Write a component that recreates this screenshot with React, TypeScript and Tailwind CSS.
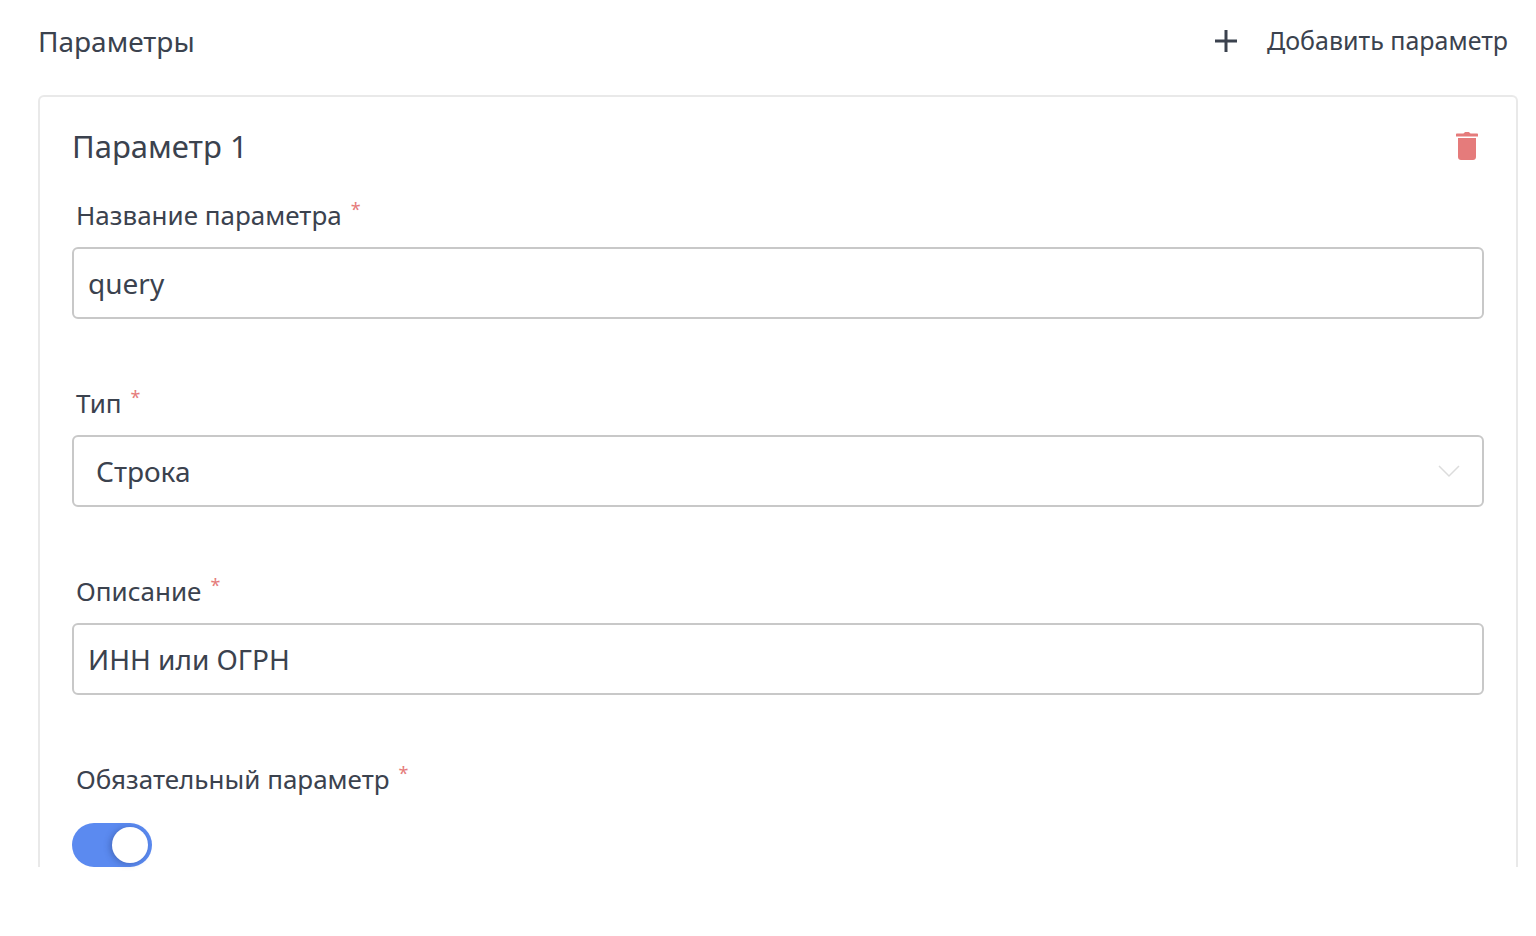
const fontClass = "font-['Noto_Sans','Open_Sans',sans-serif]";

function Label({ text }: { text: string }) {
  return (
    <div className="flex h-8 items-center pl-1 text-[26px] leading-8 text-[#3b424e]">
      <span>{text}</span>
      <span className="ml-[9px] -mt-3 text-[18px] leading-none text-[#e57b7b]">*</span>
    </div>
  );
}

function TextField({ label, value }: { label: string; value: string }) {
  return (
    <div className="mb-[68px]">
      <Label text={label} />
      <div className="mt-4 flex h-[72px] items-center rounded-[6px] border-2 border-[#c8c8c8] px-[14px] text-[28px] text-[#3b424e]">
        {value}
      </div>
    </div>
  );
}

export default function App() {
  return (
    <div className={`h-[897px] overflow-hidden bg-white ${fontClass}`}>
      {/* Header */}
      <div className="flex h-[95px] items-start justify-between pl-[38px] pr-7 pt-[23px]">
        <h2 className="text-[28px] leading-9 font-normal text-[#3b424e]">Параметры</h2>
        <button className="flex h-9 items-center text-[25px] text-[#3b424e]">
          <svg width="22" height="22" viewBox="0 0 22 22" className="mr-[30px]">
            <path d="M11 0v22M0 11h22" stroke="#3b424e" strokeWidth="3" fill="none" />
          </svg>
          Добавить параметр
        </button>
      </div>

      {/* Card */}
      <div className="ml-[38px] mr-[18px] rounded-t-[6px] border-2 border-b-0 border-[#e9e9e9] px-8 pt-[27px]">
        <div className="mb-[31px] flex h-11 items-center justify-between">
          <h3 className="text-[31px] font-normal text-[#3b424e]">Параметр 1</h3>
          <svg width="22" height="28" viewBox="0 0 22 28" className="mr-[6px]">
            <path
              d="M7.5 1.5C8 .6 9 0 10 0h2c1 0 2 .6 2.5 1.5H21c.6 0 1 .4 1 1v2H0v-2c0-.6.4-1 1-1z"
              fill="#e57b7b"
            />
            <path d="M2 6h18v19c0 1.700-1.300 3-3 3H5c-1.700 0-3-1.300-3-3z" fill="#e57b7b" />
          </svg>
        </div>

        <TextField label="Название параметра" value="query" />

        <div className="mb-[68px]">
          <Label text="Тип" />
          <div className="mt-4 flex h-[72px] items-center justify-between rounded-[6px] border-2 border-[#c8c8c8] pl-[22px] pr-[22px] text-[28px] text-[#3b424e]">
            Строка
            <svg width="22" height="13" viewBox="0 0 22 13">
              <path d="M1 1l10 10L21 1" stroke="#dcdcdc" strokeWidth="1.500" fill="none" />
            </svg>
          </div>
        </div>

        <TextField label="Описание" value="ИНН или ОГРН" />

        <Label text="Обязательный параметр" />
        <div className="relative mt-7 h-11 w-20 rounded-full bg-[#5b8af0]">
          <div className="absolute right-1 top-1 h-9 w-9 rounded-full bg-white shadow-[-2px_1px_6px_rgba(30,50,100,0.35)]" />
        </div>
      </div>
    </div>
  );
}
